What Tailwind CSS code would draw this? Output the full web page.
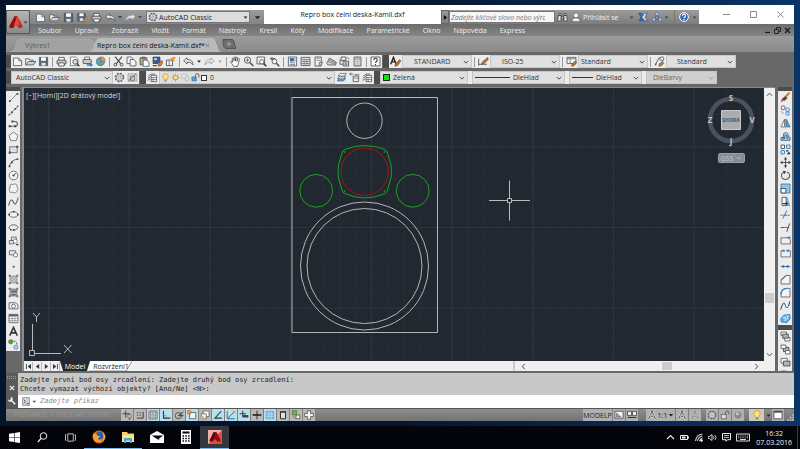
<!DOCTYPE html>
<html lang="cs">
<head>
  <meta charset="UTF-8" />
  <meta name="viewport" content="width=device-width, initial-scale=1" />
  <title>Repro box čelní deska-Kamil.dxf</title>
  <script src="https://cdn.jsdelivr.net/npm/@tailwindcss/browser@4"></script>
</head>
<body class="flex h-screen flex-col overflow-hidden bg-linear-to-r from-[#03142b] via-[#06162f] to-[#0a3566] font-['Open_Sans',sans-serif] text-[7px] leading-[9px] text-[#222]">

  <!-- icon sprite -->
  <svg class="hidden" aria-hidden="true">
    <symbol id="caret" viewBox="0 0 8 8"><path d="M1 2.5h6L4 6z" fill="currentColor"/></symbol>
    <symbol id="chev" viewBox="0 0 8 8"><path d="M1 2.5l3 3 3-3" fill="none" stroke="currentColor" stroke-width="1.1"/></symbol>
    <symbol id="new" viewBox="0 0 16 16"><path d="M2 3h8l4 4v7H2z" fill="#f4f4f4" stroke="#5a606a" stroke-width="1.3"/><path d="M10 3v4h4" fill="none" stroke="#5a606a" stroke-width="1.2"/></symbol>
    <symbol id="open" viewBox="0 0 16 16"><path d="M1 13V4h5l1 2h5v2" fill="#eee" stroke="#5a606a" stroke-width="1.3"/><path d="M1 13l4-5h11l-4 5z" fill="#ccd1d8" stroke="#5a606a" stroke-width="1.3"/></symbol>
    <symbol id="save" viewBox="0 0 16 16"><path d="M2 2h12v12H2z" fill="#5b6778" stroke="#414b59"/><path d="M4.500 2h7v5h-7z" fill="#fff"/><path d="M5 10h6v4H5z" fill="#dfe3e8"/></symbol>
    <symbol id="saveas" viewBox="0 0 16 16"><path d="M1 2h11v11H1z" fill="#5b6778" stroke="#414b59"/><path d="M3.500 2h6v4h-6z" fill="#fff"/><path d="M4 9h5v4H4z" fill="#dfe3e8"/><path d="M14 7l-5 6-1 3 3-2 5-5z" fill="#e59a3c" stroke="#7a5020" stroke-width=".7"/></symbol>
    <symbol id="print" viewBox="0 0 16 16"><path d="M4 6V2h8v4" fill="#fff" stroke="#444" stroke-width="1.2"/><rect x="1.500" y="6" width="13" height="6" rx="1.500" fill="#c9ccd1" stroke="#444" stroke-width="1.3"/><path d="M4 10h8v4.500H4z" fill="#fff" stroke="#444" stroke-width="1.200"/></symbol>
    <symbol id="preview" viewBox="0 0 16 16"><path d="M2 1.500h8l3 3V14H2z" fill="#fff" stroke="#555"/><circle cx="9" cy="8.500" r="3.500" fill="#dbe6f2" stroke="#444" stroke-width="1.300"/><path d="M11.500 11l3.500 4" stroke="#444" stroke-width="2"/></symbol>
    <symbol id="plot" viewBox="0 0 16 16"><path d="M4 5V1.500h7V5" fill="#fff" stroke="#444"/><rect x="1.500" y="5" width="12" height="6" rx="1" fill="#c9ccd1" stroke="#444" stroke-width="1.200"/><path d="M7 12h5V9.500l4 3.500-4 3v-2H7z" fill="#2c7cc4"/></symbol>
    <symbol id="globe" viewBox="0 0 16 16"><path d="M8 2a6 6 0 1 0 6 6H8z" fill="#5f9fd0" stroke="#47607a"/><path d="M2.500 9c3-2 4 4 7 3l-2 2c-3 0-5-2-5-5z" fill="#58a558"/><path d="M9 1a6 6 0 0 1 6 6H9z" fill="#e7953b" stroke="#8b5c20" stroke-width=".6"/></symbol>
    <symbol id="cut" viewBox="0 0 16 16"><path d="M3 1l8 10M13 1L5 11" stroke="#444" stroke-width="1.600"/><circle cx="3.500" cy="12.500" r="2" fill="none" stroke="#444" stroke-width="1.400"/><circle cx="12.500" cy="12.500" r="2" fill="none" stroke="#444" stroke-width="1.400"/></symbol>
    <symbol id="copy" viewBox="0 0 16 16"><path d="M1.500 1.500h6l3 3V11h-9z" fill="#fff" stroke="#555" stroke-width="1.200"/><path d="M6 5h5l3.500 3v6.500H6z" fill="#f4f4f4" stroke="#555" stroke-width="1.200"/></symbol>
    <symbol id="paste" viewBox="0 0 16 16"><path d="M1.500 2.500h10V13h-10z" fill="#b9a283" stroke="#555" stroke-width="1.200"/><path d="M4 1h5v3H4z" fill="#666"/><path d="M6 6h5l3.500 3v6H6z" fill="#fff" stroke="#555" stroke-width="1.200"/></symbol>
    <symbol id="match" viewBox="0 0 16 16"><path d="M1.500 1.500h10v8h-10z" fill="#2d5f9a" stroke="#334"/><path d="M3 3h4v3H3z" fill="#b8d6f0"/><path d="M1 11h8M1 14h6" stroke="#555" stroke-width="1.500"/><path d="M14 6l-5 6v3l4-1 3-5z" fill="#d27c35" stroke="#6a3d18" stroke-width=".7"/></symbol>
    <symbol id="block" viewBox="0 0 16 16"><path d="M2 6v8h9V6z" fill="#f4f4f4" stroke="#4d5a6b" stroke-width="1.300"/><path d="M6 6v8" stroke="#4d5a6b"/><path d="M12 1l4 1-3 3 2 3-4-1-2 2V5l-2-2 3 .2z" fill="#e9913a"/></symbol>
    <symbol id="undo" viewBox="0 0 16 16"><path d="M1 7l5-4.500V5c5 0 8.500 2 8.500 8-2-3.500-4.500-4-8.500-4v2.500z" fill="#e4e6e9" stroke="#4d535c" stroke-width="1.200"/></symbol>
    <symbol id="redo" viewBox="0 0 16 16"><path d="M15 7l-5-4.500V5c-5 0-8.500 2-8.500 8 2-3.500 4.500-4 8.500-4v2.500z" fill="#e4e6e9" stroke="#9a9ea5" stroke-width="1.200"/></symbol>
    <symbol id="pan" viewBox="0 0 16 16"><path d="M5 15c-1-3-4-5-4-7 1-1 2 0 3 1L3 3.500c1-1 2 0 2 1L6 7V2c1-1 2-1 2 0v5l1-5c1-1 2 0 2 1l-1 5 2-4c1-1 2 0 2 1l-2 6-1 4z" fill="#fff" stroke="#444" stroke-width="1.100"/></symbol>
    <symbol id="zoom" viewBox="0 0 16 16"><circle cx="6.500" cy="6" r="4.500" fill="#f4f4f4" stroke="#4c4c4c" stroke-width="1.300"/><path d="M4 6h5M6.500 3.500v5" stroke="#4c4c4c"/><path d="M10 9.500l5 5" stroke="#4c4c4c" stroke-width="2.200"/></symbol>
    <symbol id="zoomwin" viewBox="0 0 16 16"><path d="M1.500 1.500h11v10h-11z" fill="#f4f4f4" stroke="#4c4c4c" stroke-width="1.200"/><circle cx="8.500" cy="8.500" r="3.200" fill="#fff" stroke="#4c4c4c" stroke-width="1.200"/><path d="M11 11l4 4" stroke="#333" stroke-width="2.200"/></symbol>
    <symbol id="zoomprev" viewBox="0 0 16 16"><path d="M1 4l4-3v2h4v2H5v2z" fill="#666"/><circle cx="8" cy="8" r="3.500" fill="#f4f4f4" stroke="#4c4c4c" stroke-width="1.200"/><path d="M10.500 10.500l4.500 4.500" stroke="#4c4c4c" stroke-width="2.200"/></symbol>
    <symbol id="props" viewBox="0 0 16 16"><path d="M2 1.500h12v13H2z" fill="#fff" stroke="#4b5563" stroke-width="1.200"/><path d="M4 3h6v5H4z" fill="#2e6fae"/><path d="M4 10h8M4 12.500h8M11.500 3v5" stroke="#667" stroke-width="1.200"/></symbol>
    <symbol id="dc" viewBox="0 0 16 16"><path d="M1.500 2h13v12h-13z" fill="#e6e8eb" stroke="#4b5563" stroke-width="1.200"/><path d="M1.500 5h13M6 5v9M10 5v9M1.500 8h13M1.500 11h13" stroke="#667" /></symbol>
    <symbol id="palette" viewBox="0 0 16 16"><path d="M3 1.500h9v13H3z" fill="#f4f4f4" stroke="#4b5563" stroke-width="1.300"/><path d="M5 4h5M5 6.500h5" stroke="#777"/><path d="M9 9h5l-3 5H9z" fill="#c9ccd1" stroke="#4b5563"/></symbol>
    <symbol id="sheets" viewBox="0 0 16 16"><path d="M1 11l4-8 10 6-1 4H3z" fill="#d4d7db" stroke="#555" stroke-width="1.200"/><path d="M3 8l11 4M4 5l10 5" stroke="#555"/></symbol>
    <symbol id="markup" viewBox="0 0 16 16"><path d="M3 1.500h7v5H3zM1.500 5v7h4" fill="none" stroke="#555" stroke-width="1.300"/><path d="M6 7.500h8v7H6z" fill="#dfe1e4" stroke="#555" stroke-width="1.300"/><path d="M12 2l3 3M8 10h4M8 12h4" stroke="#555" stroke-width="1.200"/></symbol>
    <symbol id="calc" viewBox="0 0 16 16"><path d="M3 1.500h10v13H3z" fill="#e6e8eb" stroke="#555" stroke-width="1.300"/><path d="M5 3.500h6v2H5z" fill="#fff" stroke="#666" stroke-width=".8"/><path d="M5 8h6M5 10.500h6M5 13h6" stroke="#777" stroke-dasharray="1.500 .8"/></symbol>
    <symbol id="help" viewBox="0 0 16 16"><path d="M1.500 1.500h13v13h-13z" fill="#fff" stroke="#444" stroke-width="1.200"/><path d="M5.500 6c0-3.500 5-3.500 5 0 0 2-2.500 2-2.500 4M8 11.500v2" fill="none" stroke="#333" stroke-width="1.600"/></symbol>
    <symbol id="tstyle" viewBox="0 0 16 16"><path d="M1 12L5 2l4 10M2.500 8.500h5" fill="none" stroke="#222" stroke-width="2"/><path d="M14 5l-6 6-1 4 4-1 5-7z" fill="#b5733c" stroke="#5a3515" stroke-width=".7"/></symbol>
    <symbol id="dstyle" viewBox="0 0 16 16"><path d="M1 4v10M1 12h12" stroke="#555" stroke-width="1.300"/><path d="M14 2l-7 6-2 4 4-1 6-6z" fill="#b5733c" stroke="#5a3515" stroke-width=".7"/></symbol>
    <symbol id="tabstyle" viewBox="0 0 16 16"><path d="M1.500 2h13v9h-13z" fill="#f7f7f7" stroke="#555" stroke-width="1.200"/><path d="M1.500 4h13M6 4v7" stroke="#555"/><path d="M14 7l-5 4-1 4 4-1 3-4z" fill="#c07a3e" stroke="#5a3515" stroke-width=".7"/></symbol>
    <symbol id="mlstyle" viewBox="0 0 16 16"><path d="M2 13L7 3h3" fill="none" stroke="#555" stroke-width="1.300"/><circle cx="11.500" cy="4" r="2.800" fill="#eee" stroke="#555" stroke-width="1.200"/><path d="M1 14l1-4 2 2z" fill="#444"/><path d="M13 8l-5 3-1 4 4-1 3-3z" fill="#c07a3e" stroke="#5a3515" stroke-width=".7"/></symbol>
    <symbol id="gear" viewBox="0 0 16 16"><circle cx="8" cy="8" r="6" fill="none" stroke="#5d6269" stroke-width="2" stroke-dasharray="2.700 2"/><circle cx="8" cy="8" r="4.800" fill="#eee" stroke="#5d6269"/><circle cx="8" cy="8" r="2" fill="#fff" stroke="#5d6269"/></symbol>
    <symbol id="wsave" viewBox="0 0 16 16"><path d="M1.500 2.500h13v11h-13z" fill="#d4d7db" stroke="#777" stroke-dasharray="2 1"/><path d="M2 13L13 3M5 6h6v6H5z" fill="none" stroke="#666" stroke-width="1.200"/></symbol>
    <symbol id="layers" viewBox="0 0 16 16"><path d="M2 6l4-3h6M1 9l4-2M1 12l4-2" fill="none" stroke="#555" stroke-width="1.200"/><path d="M6 5h8v9H6z" fill="#fff" stroke="#555" stroke-width="1.200"/><path d="M6 8h8M6 11h8M9 8v6" stroke="#555"/></symbol>
    <symbol id="bulb" viewBox="0 0 16 16"><path d="M8 1a5 5 0 0 0-3 9l.5 2h5l.5-2A5 5 0 0 0 8 1z" fill="#ffe27a" stroke="#b08a2c"/><path d="M6 13h4v2H6z" fill="#777"/></symbol>
    <symbol id="sun" viewBox="0 0 16 16"><path d="M8 1v14M1 8h14M3 3l10 10M13 3L3 13" stroke="#8a7a4a" stroke-width="1.200"/><circle cx="8" cy="8" r="3.800" fill="#ffe07a" stroke="#b08a2c"/></symbol>
    <symbol id="vpf" viewBox="0 0 16 16"><path d="M1.500 2h9v8h-9z" fill="#e4e4e4" stroke="#aaa"/><circle cx="10.500" cy="10.500" r="4" fill="#ddd" stroke="#aaa"/></symbol>
    <symbol id="lock" viewBox="0 0 16 16"><path d="M1.500 7h8v7h-8z" fill="#4aa0d8" stroke="#23628f"/><path d="M8 7V4a3 3 0 0 1 6 0v4" fill="none" stroke="#555" stroke-width="1.600"/></symbol>
    <symbol id="stack" viewBox="0 0 16 16"><path d="M2 13l3-4h9l-3 4z" fill="#6aaee0" stroke="#45566a"/><path d="M2 10l3-4h9l-3 4z" fill="#b7d9f2" stroke="#45566a"/><path d="M3 6l3-4h9l-3 4z" fill="#f3f3f3" stroke="#45566a"/></symbol>
    <symbol id="lprev" viewBox="0 0 16 16"><path d="M1 3h5M3 1L1 3l2 2" stroke="#555" fill="none" stroke-width="1.200"/><path d="M6 6h8v8H6zM8 4h7" fill="#e8e8e8" stroke="#555" stroke-width="1.200"/><path d="M6 9h8" stroke="#777"/></symbol>

    <symbol id="line" viewBox="0 0 16 16"><path d="M3 13L13 3" stroke="#6d737c" stroke-width="1.200"/><path d="M1.500 12h2.500v2.500H1.500zM12.500 1.500H15V4h-2.500z" fill="#444"/></symbol>
    <symbol id="xline" viewBox="0 0 16 16"><path d="M1 15L15 1" stroke="#6d737c" stroke-width="1.200"/><path d="M4.500 9.500H7V12H4.500zM9.500 4.500H12V7H9.500zM1 13h2v2H1zM13 1h2v2h-2z" fill="#444"/></symbol>
    <symbol id="pline" viewBox="0 0 16 16"><path d="M2 12h8c5 0 5-7 0-7H6" fill="none" stroke="#5a606a" stroke-width="1.600"/><path d="M1 10.500h3v3H1zM5 3.500h3v3H5zM9 10.500h3v3H9z" fill="#444"/></symbol>
    <symbol id="polygon" viewBox="0 0 16 16"><path d="M8 1.500l6.500 5L12 14H4L1.500 6.500z" fill="#f4f4f4" stroke="#6d737c" stroke-width="1.300"/></symbol>
    <symbol id="rect" viewBox="0 0 16 16"><path d="M2.500 4h11v8.500h-11z" fill="#dde0e4" stroke="#6d737c" stroke-width="1.300"/><path d="M1 11h3v3H1zM12 2.500h3v3h-3z" fill="#444"/></symbol>
    <symbol id="arc" viewBox="0 0 16 16"><path d="M2 14C3 8 7 4 14 3" fill="none" stroke="#5a606a" stroke-width="1.400"/><path d="M1 12.500h2.500V15H1zM4.500 6.500H7V9H4.500zM12.500 2H15v2.500h-2.500z" fill="#444"/></symbol>
    <symbol id="circle" viewBox="0 0 16 16"><circle cx="8" cy="8" r="6.300" fill="#f4f4f4" stroke="#6d737c" stroke-width="1.400"/><path d="M8 8l4-4" stroke="#444" stroke-width="1.200"/><circle cx="8" cy="8" r="1.600" fill="#444"/></symbol>
    <symbol id="cloud" viewBox="0 0 16 16"><path d="M4 6C1 4 4 0 7 2.500c3-2.500 8 0 6 3.500 3 2 1 5 0 5 0 4-5 4-6 2-3 2-6 0-4-3-2-1-2-4 1-4z" fill="#f4f4f4" stroke="#6d737c" stroke-width="1.300"/></symbol>
    <symbol id="spline" viewBox="0 0 16 16"><path d="M1 14C3 4 6 4 8 9s4 3 7-7" fill="none" stroke="#5a606a" stroke-width="1.500"/></symbol>
    <symbol id="ellipse" viewBox="0 0 16 16"><ellipse cx="8" cy="8" rx="6" ry="4" fill="#f4f4f4" stroke="#5a606a" stroke-width="1.300"/><path d="M0.500 7H3v2.500H.5zM13 7h2.500v2.500H13zM7 3h2.500v2H7z" fill="#444"/></symbol>
    <symbol id="elarc" viewBox="0 0 16 16"><path d="M4 11C-2 8 4 4 8 4s9 3 5 6c-1 1-3 1.500-5 1.500" fill="none" stroke="#5a606a" stroke-width="1.400"/><path d="M3 10h2.500v2.500H3zM7 10.500h2.500V13H7z" fill="#444"/></symbol>
    <symbol id="insert" viewBox="0 0 16 16"><path d="M5 3h7v5H5zM2 8h6v5H2z" fill="#e4e6e9" stroke="#5a606a" stroke-width="1.200"/><circle cx="10.500" cy="9" r="3" fill="#fff" stroke="#5a606a"/><path d="M11 15h5l-2.500-2.500z" fill="#222"/></symbol>
    <symbol id="mkblock" viewBox="0 0 16 16"><path d="M2 4h9v6H2z" fill="#e4e6e9" stroke="#5a606a" stroke-width="1.200"/><circle cx="11" cy="10" r="3" fill="#fff" stroke="#5a606a" stroke-width="1.200"/></symbol>
    <symbol id="point" viewBox="0 0 16 16"><path d="M7 7h2.500v2.500H7z" fill="#444"/></symbol>
    <symbol id="hatch" viewBox="0 0 16 16"><path d="M3 3h10v10H3z" fill="#c4c8cd" stroke="#5a606a" stroke-dasharray="2 1"/><path d="M3 8l5-5M3 13L13 3M8 13l5-5" stroke="#888"/><path d="M1 1h3v3H1zM12 12h3v3h-3zM12 1h3v3h-3zM1 12h3v3H1z" fill="#777"/></symbol>
    <symbol id="grad" viewBox="0 0 16 16"><path d="M3 3h10v10H3z" fill="#a9aeb5" stroke="#5a606a"/><path d="M5 5h8v3H5zM5 10h6v2H5z" fill="#60666f"/><path d="M1 1h3v3H1zM12 12h3v3h-3zM12 1h3v3h-3zM1 12h3v3H1z" fill="#777"/></symbol>
    <symbol id="region" viewBox="0 0 16 16"><path d="M1.500 4h6c4-1 7 2 7 5v4h-13z" fill="#e9ebed" stroke="#5a606a" stroke-width="1.200"/><circle cx="8" cy="9" r="2.800" fill="#fff" stroke="#5a606a" stroke-width="1.200"/></symbol>
    <symbol id="table" viewBox="0 0 16 16"><path d="M1.500 2h13v12h-13z" fill="#fff" stroke="#5a606a" stroke-width="1.200"/><path d="M1.500 2h13v3h-13z" fill="#5a606a"/><path d="M6 5v9M10 5v9M1.500 8h13M1.500 11h13" stroke="#888"/></symbol>
    <symbol id="mtext" viewBox="0 0 16 16"><path d="M2.500 14L8 2l5.500 12M4.500 10h7" fill="none" stroke="#333" stroke-width="2.200"/></symbol>
    <symbol id="addsel" viewBox="0 0 16 16"><circle cx="4" cy="4" r="3" fill="#52a83e" stroke="#2f6d22"/><path d="M8 3c4 0 5 2 5 5" fill="none" stroke="#444" stroke-width="1.300" stroke-dasharray="2 1"/><circle cx="11.500" cy="12" r="3" fill="#a8d2f2" stroke="#3c82b8"/></symbol>

    <symbol id="erase" viewBox="0 0 16 16"><path d="M14 1L7 8" stroke="#c47a35" stroke-width="2.600"/><path d="M8 6l3 3-5 4-4-3z" fill="#4b4b4b"/><path d="M1 12l3-1 1 2-3 2z" fill="#d9534f"/></symbol>
    <symbol id="mcopy" viewBox="0 0 16 16"><circle cx="4.500" cy="4" r="2.800" fill="#fff" stroke="#444" stroke-width="1.200"/><circle cx="11" cy="7" r="2.800" fill="#d3e8f8" stroke="#2c7cc4" stroke-width="1.200"/><circle cx="11" cy="12.500" r="2.500" fill="#d3e8f8" stroke="#2c7cc4" stroke-width="1.200"/><path d="M2 9l3 4" stroke="#2c7cc4"/></symbol>
    <symbol id="mirror" viewBox="0 0 16 16"><path d="M6.500 2v11H1.500z" fill="#fff" stroke="#555" stroke-width="1.100"/><path d="M9.500 2v11h5z" fill="#56a5df" stroke="#2c6ba4" stroke-width="1.100"/><path d="M8 1v14" stroke="#777"/></symbol>
    <symbol id="offset" viewBox="0 0 16 16"><path d="M1.500 13.500v-4H5V6c0-5 7-5 7 0v3h2.500v4.500z" fill="#b9dbf4" stroke="#2c6ba4" stroke-width="1.400"/><path d="M4 12V11h3V7c0-2 3-2 3 0v4h2" fill="none" stroke="#444" stroke-width="1.200"/></symbol>
    <symbol id="array" viewBox="0 0 16 16"><path d="M1.500 1.500h5v5h-5z" fill="#fff" stroke="#444" stroke-width="1.300"/><path d="M9.500 1.500h5v5h-5zM1.500 9.500h5v5h-5z" fill="#d3e8f8" stroke="#2c7cc4" stroke-width="1.300"/><path d="M9 9h3v2H9zM10 15h5l-2-4z" fill="#222"/></symbol>
    <symbol id="move" viewBox="0 0 16 16"><path d="M8 2v12M2 8h12" stroke="#444" stroke-width="1.300"/><path d="M8 0l2.500 3.500h-5zM8 16l2.500-3.500h-5zM0 8l3.500-2.500v5zM16 8l-3.500-2.500v5z" fill="#444"/></symbol>
    <symbol id="rotate" viewBox="0 0 16 16"><path d="M5 3.500a6 5.500 0 1 0 5-.5" fill="none" stroke="#555" stroke-width="1.500"/><path d="M4 1l5 1-3 4z" fill="#333"/></symbol>
    <symbol id="scale" viewBox="0 0 16 16"><path d="M1.500 1.500h13v13h-13z" fill="#8fc4ec" stroke="#3c7fb4" stroke-width="1.300"/><path d="M1.500 8h7v6.500h-7z" fill="#fff" stroke="#444" stroke-width="1.300"/></symbol>
    <symbol id="stretch" viewBox="0 0 16 16"><path d="M3 2h6v12H3z" fill="#fff" stroke="#444" stroke-width="1.200"/><path d="M9 2h1l4 12H9z" fill="#8fc4ec" stroke="#3c7fb4"/><path d="M4 10h5v-2l3 3-3 3v-2H4z" fill="#333"/></symbol>
    <symbol id="trim" viewBox="0 0 16 16"><path d="M1 9h4M9 9h6" stroke="#444" stroke-width="1.300" stroke-dasharray="2 1"/><path d="M5 9h4M4 14l6-12" stroke="#2c7cc4" stroke-width="1.400"/></symbol>
    <symbol id="extend" viewBox="0 0 16 16"><path d="M1 8h5" stroke="#444" stroke-width="1.300"/><path d="M6 8h6" stroke="#2c7cc4" stroke-width="1.400"/><path d="M10 14l4-12" stroke="#444" stroke-width="1.400"/></symbol>
    <symbol id="break1" viewBox="0 0 16 16"><path d="M12 4H1.500v9H15V6" fill="#f1f1f1" stroke="#666" stroke-width="1.300"/><path d="M11 2.500h4v3h-4z" fill="#2c7cc4"/></symbol>
    <symbol id="break2" viewBox="0 0 16 16"><path d="M4 4H1.500v9H15V4h-3" fill="#f1f1f1" stroke="#666" stroke-width="1.300"/><path d="M3.500 2.500H7v3H3.500zM9.500 2.500H13v3H9.500z" fill="#2c7cc4"/></symbol>
    <symbol id="join" viewBox="0 0 16 16"><path d="M1 8h14" stroke="#2c7cc4" stroke-width="1.400"/><path d="M4 5.500L7.500 8 4 10.500zM12 5.500L8.500 8l3.500 2.500z" fill="#2c5f94"/></symbol>
    <symbol id="chamfer" viewBox="0 0 16 16"><path d="M1.500 14.500V9L9 2h5.500v12.500z" fill="#f4f4f4" stroke="#666" stroke-width="1.300"/><path d="M1.500 9L9 2" stroke="#2c7cc4" stroke-width="1.600"/></symbol>
    <symbol id="fillet" viewBox="0 0 16 16"><path d="M1.500 14.500V11c0-6 4-9 9-9h4v12.500z" fill="#f4f4f4" stroke="#666" stroke-width="1.300"/><path d="M1.500 11c0-6 4-9 9-9" fill="none" stroke="#2c7cc4" stroke-width="1.600"/></symbol>
    <symbol id="blend" viewBox="0 0 16 16"><path d="M1 14c1-4 2-6 3-8M12 9c1-2 2-4 2-7" fill="none" stroke="#444" stroke-width="1.500"/><path d="M4 6c4-6 3 9 8 4" fill="none" stroke="#2c7cc4" stroke-width="1.500"/></symbol>
    <symbol id="explode" viewBox="0 0 16 16"><path d="M1 8l5-5 8-1 1 6-5 6-8-1z" fill="#62aee6" stroke="#2c6ba4"/><path d="M4 7l4-1-1 6M9 4l3 1-2 5" fill="none" stroke="#e8f4fd" stroke-width="1.300"/></symbol>
    <symbol id="order1" viewBox="0 0 16 16"><path d="M1.500 1.500h8v5h-8zM7 9.500h7.500v5H7z" fill="#fff" stroke="#555" stroke-width="1.200"/><path d="M4 4.500h8v6H4z" fill="#aab4bf" stroke="#444" stroke-width="1.200"/></symbol>
    <symbol id="order2" viewBox="0 0 16 16"><path d="M5 5h8v6H5z" fill="#aab4bf" stroke="#444" stroke-width="1.200"/><path d="M1.500 1.500h7v5h-7zM8 9.500h6.500v5H8z" fill="#fff" stroke="#555" stroke-width="1.200"/></symbol>
    <symbol id="order3" viewBox="0 0 16 16"><path d="M1.500 2h9v7h-9z" fill="#fff" stroke="#555" stroke-width="1.200"/><path d="M5 6h9.500v7H5z" fill="#aab4bf" stroke="#444" stroke-width="1.200"/></symbol>

    <symbol id="acad" viewBox="0 0 16 16"><path d="M6.500 1h3L16 14l-4.500 1L8 11l-3.500 4L0 14z" fill="#c8221a"/><path d="M6.500 1L0 14l4.500 1L8 5z" fill="#8d100d"/><path d="M9.500 1L8 5l-2.500 7L8 11l4 1z" fill="#ea4a38"/></symbol>
    <symbol id="binoc" viewBox="0 0 16 16"><path d="M2 5h4v8H1zM10 5h4l1 8h-5zM6 7h4v3H6zM3 2h3v3H3zM10 2h3v3h-3z" fill="#e8e8e8" stroke="#333"/></symbol>
    <symbol id="user" viewBox="0 0 16 16"><circle cx="8" cy="5.500" r="3.800" fill="#fff" stroke="#555"/><path d="M1.500 15c0-7 13-7 13 0z" fill="#fff" stroke="#555"/></symbol>
    <symbol id="exch" viewBox="0 0 16 16"><path d="M1 2h5l3 4-3 4 4 4H2l3-6z" fill="#3f6fc0" stroke="#25427a"/><path d="M15 2h-4L6 8l5 6h4l-4-6z" fill="#dfe8f6" stroke="#25427a"/></symbol>
    <symbol id="a360" viewBox="0 0 16 16"><path d="M8 4l-5 8h10z" fill="none" stroke="#3c5fa0" stroke-width="1.500"/><path d="M6 1h4v4H6zM1 10h4v4H1zM11 10h4v4h-4z" fill="#e6edf8" stroke="#3c5fa0"/></symbol>
    <symbol id="helpc" viewBox="0 0 16 16"><circle cx="8" cy="8" r="7" fill="#3c68b4" stroke="#fff" stroke-width="1.600"/><path d="M5.500 6c0-3.500 5-3.500 5 0 0 2-2.500 2-2.500 4M8 11v2" fill="none" stroke="#fff" stroke-width="1.700"/></symbol>

    <symbol id="sinfer" viewBox="0 0 16 16"><path d="M6 1v11M1 6h12" stroke="#333" stroke-width="1.400"/><circle cx="12" cy="10" r="3" fill="#e4b0a8" stroke="#555"/><path d="M12 13v3" stroke="#2c5fa4" stroke-width="2"/></symbol>
    <symbol id="ssnap" viewBox="0 0 16 16"><path d="M3 13h10V3" fill="none" stroke="#333" stroke-width="1.500"/><path d="M3 3h2v2H3zM7 3h2v2H7zM3 7h2v2H3zM7 7h2v2H7z" fill="#555"/></symbol>
    <symbol id="sgrid" viewBox="0 0 16 16"><path d="M1.500 1.500h13v13h-13z" fill="#f5fcff" stroke="#444"/><path d="M4.500 1v14M8 1v14M11.500 1v14M1 4.500h14M1 8h14M1 11.500h14" stroke="#555" stroke-width=".9"/></symbol>
    <symbol id="sortho" viewBox="0 0 16 16"><path d="M4 1v12h11" fill="none" stroke="#333" stroke-width="1.700"/><path d="M4 9h4v4" fill="none" stroke="#4a86b8"/></symbol>
    <symbol id="spolar" viewBox="0 0 16 16"><circle cx="7" cy="9" r="5" fill="none" stroke="#444" stroke-width="1.400"/><path d="M7 9l8-6M7 9h8" stroke="#333" stroke-width="1.400"/></symbol>
    <symbol id="sosnap" viewBox="0 0 16 16"><path d="M4 4h10v10H4z" fill="#f1f1f1" stroke="#555" stroke-width="1.300"/><path d="M1 1h5v5H1z" fill="#f0a060" stroke="#b45a2a"/></symbol>
    <symbol id="s3d" viewBox="0 0 16 16"><path d="M5 1.500h9.500v9H5z" fill="#f7f7f7" stroke="#555" stroke-width="1.200"/><path d="M2 6h8v8H2z" fill="#f4ece9" stroke="#666" stroke-width="1.200"/><circle cx="4" cy="12" r="2.500" fill="#efa58e"/></symbol>
    <symbol id="strack" viewBox="0 0 16 16"><path d="M13 2L3 13h11" fill="none" stroke="#333" stroke-width="1.700"/></symbol>
    <symbol id="sducs" viewBox="0 0 16 16"><path d="M2 2v12h12M2 14L13 3" fill="none" stroke="#3a6f9f" stroke-width="1.600"/><path d="M10 1h5v5z" fill="#e8a33a"/></symbol>
    <symbol id="sdyn" viewBox="0 0 16 16"><path d="M6 1v10M1 6h10" stroke="#333" stroke-width="1.500"/><path d="M6 8h9v4H6z" fill="#444"/></symbol>
    <symbol id="slwt" viewBox="0 0 16 16"><path d="M8 1v14" stroke="#222" stroke-width="1.400"/><path d="M1 8h14" stroke="#222" stroke-width="2.600"/></symbol>
    <symbol id="stpy" viewBox="0 0 16 16"><path d="M2 2h12v12H2z" fill="#7db8dc" stroke="#3f7ba8" stroke-dasharray="1.500 1"/><path d="M2 6h12M2 10h12M6 2v12M10 2v12" stroke="#d8eefa" stroke-width=".8"/></symbol>
    <symbol id="sqp" viewBox="0 0 16 16"><path d="M4 3h8v11H4z" fill="#ddd" stroke="#333" stroke-width="1.600"/><path d="M3 3h10" stroke="#333" stroke-width="2"/></symbol>
    <symbol id="ssc" viewBox="0 0 16 16"><path d="M2 1h7v7H2z" fill="#6fb25c" stroke="#3d6e30"/><path d="M8 8h6v6H8z" fill="#eee" stroke="#555" stroke-width="1.300"/><path d="M3 10l4 4" stroke="#555" stroke-width="1.300"/></symbol>
    <symbol id="sam" viewBox="0 0 16 16"><path d="M5.500 1h5v4.500H15v5h-4.500V15h-5v-4.500H1v-5h4.500z" fill="#f3f3f3" stroke="#555" stroke-width="1.300"/></symbol>
    <symbol id="slay" viewBox="0 0 16 16"><path d="M1.500 2h13v11h-13z" fill="#f4f4f4" stroke="#444" stroke-width="1.200"/><path d="M4 5l7 6H4z" fill="#9aa" stroke="#555"/></symbol>
    <symbol id="squick" viewBox="0 0 16 16"><path d="M1 2h6v7H1zM9 2h6v7H9z" fill="#fff" stroke="#333" stroke-width="1.300"/><path d="M1 12h14" stroke="#333" stroke-width="1.600"/></symbol>
    <symbol id="sanno" viewBox="0 0 16 16"><path d="M8 1L3 13M8 1l5 12M8 1v9M1 14l7-4 7 4" fill="none" stroke="#f2f2f2" stroke-width="3"/><path d="M8 1L3 13M8 1l5 12M8 1v9M1 14l7-4 7 4" fill="none" stroke="#444" stroke-width="1.200"/></symbol>
  </svg>

  <!-- application window -->
  <main class="mx-[6px] mt-[5px] mb-[5px] flex min-h-0 flex-1 flex-col bg-[#686868]">

    <!-- title bar -->
    <header class="relative shrink-0">
      <button aria-label="Nabídka aplikace" class="absolute top-[5px] left-0 z-10 flex h-[24px] w-[24px] items-center border border-[#555] bg-linear-to-b from-[#b5b5b5] to-[#8b8b8b] pl-[2px]">
        <svg class="size-[14px]"><use href="#acad"/></svg>
        <svg class="size-[5px] text-[#444]"><use href="#caret"/></svg>
      </button>
      <div class="flex h-[19px] bg-white pt-[5px]">
        <div class="flex items-center bg-linear-to-b from-[#9c9c9c] to-[#848484] pl-[27px] [&>button]:flex [&>button]:w-[14px] [&>button]:justify-center [&>button>svg]:size-[11px]">
          <button aria-label="Nový"><svg><use href="#new"/></svg></button>
          <button aria-label="Otevřít"><svg><use href="#open"/></svg></button>
          <button aria-label="Uložit"><svg><use href="#save"/></svg></button>
          <button aria-label="Uložit jako"><svg><use href="#saveas"/></svg></button>
          <button aria-label="Tisk"><svg><use href="#print"/></svg></button>
          <button aria-label="Zpět"><svg><use href="#undo"/></svg></button>
          <svg class="size-[6px] text-[#444]"><use href="#caret"/></svg>
          <button aria-label="Znovu"><svg><use href="#redo"/></svg></button>
          <svg class="mr-[3px] size-[6px] text-[#555]"><use href="#caret"/></svg>
          <div class="relative flex h-[12px] w-[104px] items-center border border-[#777] bg-[#dcdcdc] pl-px">
            <svg class="size-[10px]"><use href="#gear"/></svg>
            <select aria-label="Pracovní prostor" class="h-full flex-1 appearance-none pl-px"><option>AutoCAD Classic</option></select>
            <svg class="absolute right-px size-[5px]"><use href="#caret"/></svg>
          </div>
          <button aria-label="Přizpůsobit" class="text-[#222] [&>svg]:p-[2px]"><svg><use href="#caret"/></svg></button>
        </div>
        <h1 class="flex-1 text-center">Repro box čelní deska-Kamil.dxf</h1>
        <div class="flex items-center bg-linear-to-b from-[#9c9c9c] to-[#7c7c7c] text-[#f2f2f2]">
          <button aria-label="Sbalit" class="flex h-full w-[8px] items-center justify-center border border-[#666]"><svg viewBox="0 0 6 6" class="size-[5px]"><path d="M1 0l4 3-4 3z" fill="#111"/></svg></button>
          <input type="search" aria-label="Hledat" placeholder="Zadejte klíčové slovo nebo výraz." class="h-[12px] w-[106px] border border-[#777] bg-[#f6f6f6] pl-px text-[7px] italic placeholder:text-[#777]" />
          <button aria-label="Vyhledat" class="ml-[2px]"><svg class="size-[11px]"><use href="#binoc"/></svg></button>
          <button class="ml-[3px] flex w-[58px] items-center"><svg class="mr-[2px] size-[10px]"><use href="#user"/></svg>Přihlásit se</button>
          <svg class="size-[5px] text-[#444]"><use href="#caret"/></svg>
          <button aria-label="Exchange" class="ml-[4px]"><svg class="size-[10px]"><use href="#exch"/></svg></button>
          <button aria-label="A360" class="ml-[4px] flex items-center"><svg class="size-[10px]"><use href="#a360"/></svg><svg class="ml-[2px] size-[5px] text-[#444]"><use href="#caret"/></svg></button>
          <button aria-label="Nápověda" class="ml-[5px] flex h-full items-center border-l border-[#777] pr-[2px] pl-[4px]"><svg class="size-[10px]"><use href="#helpc"/></svg><svg class="ml-[3px] size-[5px] text-[#444]"><use href="#caret"/></svg></button>
        </div>
        <div class="-mt-[5px] ml-[14px] flex items-center [&>button]:flex [&>button]:w-[27px] [&>button]:justify-center [&_svg]:size-[7px]">
          <button aria-label="Minimalizovat"><svg viewBox="0 0 7 7"><path d="M0 3.500h7" stroke="#888"/></svg></button>
          <button aria-label="Maximalizovat"><svg viewBox="0 0 7 7"><path d="M.5.5h6v6h-6z" fill="none" stroke="#888"/></svg></button>
          <button aria-label="Zavřít"><svg viewBox="0 0 7 7"><path d="M.5.5l6 6m0-6l-6 6" stroke="#888"/></svg></button>
        </div>
      </div>

      <!-- menu -->
      <nav class="flex h-[12px] items-center bg-linear-to-b from-[#6c6c6c] to-[#858585] pl-[32px] text-[#f0f0f0]">
        <div class="flex flex-1 gap-[13px]">
          <a href="#">Soubor</a><a href="#">Upravit</a><a href="#">Zobrazit</a><a href="#">Vložit</a><a href="#">Formát</a><a href="#">Nástroje</a><a href="#">Kreslí</a><a href="#">Kóty</a><a href="#">Modifikace</a><a href="#">Parametrické</a><a href="#">Okno</a><a href="#">Nápověda</a><a href="#">Express</a>
        </div>
        <div class="flex gap-[3px] pr-[3px] [&_svg]:size-[7px]">
          <button aria-label="Minimalizovat výkres"><svg viewBox="0 0 7 7"><path d="M1 5.500h5" stroke="#222" stroke-width="1.300"/></svg></button>
          <button aria-label="Obnovit výkres"><svg viewBox="0 0 7 7"><path d="M2.500 2V.5h4v4H5M.5 2.500h4v4h-4z" fill="none" stroke="#222"/></svg></button>
          <button aria-label="Zavřít výkres"><svg viewBox="0 0 7 7"><path d="M1 1l5 5m0-5L1 6" stroke="#222" stroke-width="1.500"/></svg></button>
        </div>
      </nav>
    </header>

    <!-- file tabs -->
    <div class="flex h-[16px] shrink-0 items-end bg-linear-to-b from-[#9b9b9b] to-[#8b8b8b] pl-[4px] whitespace-nowrap">
      <button class="relative h-[14px] w-[84px] pl-[15px] text-left text-[#5c5c5c]">
        <svg viewBox="0 0 84 14" preserveAspectRatio="none" class="absolute inset-0 size-full"><path d="M0 14C6 14 5 1 11 1h68l5 3v10z" fill="#a2a2a2" stroke="#b0b0b0" stroke-width=".5"/></svg>
        <span class="relative">Výkres1</span>
      </button>
      <button class="relative -ml-[4px] h-[14px] w-[132px] pl-[7px] text-left text-[#111]">
        <svg viewBox="0 0 132 14" preserveAspectRatio="none" class="absolute inset-0 size-full"><path d="M-1 14C5 14 3 0 10 0h112c5 0 5 14 10 14z" fill="#b9b9b9"/></svg>
        <span class="relative flex items-center justify-between pr-[12px]">Repro box čelní deska-Kamil.dxf* <svg viewBox="0 0 7 7" class="size-[5px]"><path d="M1 1l5 5m0-5L1 6" stroke="#777" stroke-width="1.300"/></svg></span>
      </button>
      <button aria-label="Nový výkres" class="self-center"><svg viewBox="0 0 14 10" class="h-[10px] w-[14px]"><path d="M1 .5h9c3 0 2 6 4 9H4C1 9 1 4 1 .5z" fill="#6c6c6c" stroke="#555"/><path d="M7 2.500v5M4.500 5h5" stroke="#999" stroke-width="1.300"/></svg></button>
    </div>

    <!-- toolbars, first row -->
    <div class="mt-[3px] flex h-[13px] shrink-0">
      <div class="flex items-center border-l-[5px] border-[#4c4c4c] bg-[#ececec] [&>button]:flex [&>button]:w-[13px] [&>button]:justify-center [&>button>svg]:size-[11px] [&>hr]:mx-[2px] [&>hr]:h-[10px] [&>hr]:w-px [&>hr]:border-0 [&>hr]:bg-[#999] [&>svg]:w-[8px] [&>svg]:h-[5px]">
        <button aria-label="Nový"><svg><use href="#new"/></svg></button>
        <button aria-label="Otevřít"><svg><use href="#open"/></svg></button>
        <button aria-label="Uložit"><svg><use href="#save"/></svg></button>
        <hr>
        <button aria-label="Tisk"><svg><use href="#print"/></svg></button>
        <button aria-label="Náhled"><svg><use href="#preview"/></svg></button>
        <button aria-label="Publikovat"><svg><use href="#plot"/></svg></button>
        <button aria-label="3D DWF"><svg><use href="#globe"/></svg></button>
        <hr>
        <button aria-label="Vyjmout"><svg><use href="#cut"/></svg></button>
        <button aria-label="Kopírovat"><svg><use href="#copy"/></svg></button>
        <button aria-label="Vložit"><svg><use href="#paste"/></svg></button>
        <button aria-label="Kopie vlastností"><svg><use href="#match"/></svg></button>
        <button aria-label="Editor bloků"><svg><use href="#block"/></svg></button>
        <hr>
        <button aria-label="Zpět"><svg><use href="#undo"/></svg></button>
        <svg><use href="#caret"/></svg>
        <button aria-label="Znovu"><svg><use href="#redo"/></svg></button>
        <svg class="text-[#999]"><use href="#caret"/></svg>
        <hr>
        <button aria-label="Posun"><svg><use href="#pan"/></svg></button>
        <button aria-label="Zoom"><svg><use href="#zoom"/></svg></button>
        <button aria-label="Zoom okno"><svg><use href="#zoomwin"/></svg></button>
        <button aria-label="Zoom předchozí"><svg><use href="#zoomprev"/></svg></button>
        <hr>
        <button aria-label="Vlastnosti"><svg><use href="#props"/></svg></button>
        <button aria-label="DesignCenter"><svg><use href="#dc"/></svg></button>
        <button aria-label="Nástrojové palety"><svg><use href="#palette"/></svg></button>
        <button aria-label="Sady listů"><svg><use href="#sheets"/></svg></button>
        <button aria-label="Revize"><svg><use href="#markup"/></svg></button>
        <button aria-label="Kalkulačka"><svg><use href="#calc"/></svg></button>
        <hr>
        <button aria-label="Nápověda"><svg><use href="#help"/></svg></button>
      </div>
      <div class="ml-px flex items-center border-l-[6px] border-[#4c4c4c] bg-[#ececec] text-[#333] [&>button]:flex [&>button]:w-[13px] [&>button]:justify-center [&>button>svg]:size-[11px] [&>div]:relative [&>div]:h-[13px] [&>div]:w-[70px] [&>div]:border [&>div]:border-[#c6c6c6] [&>div]:bg-[#e0e0e0] [&>div>svg]:absolute [&>div>svg]:top-[3px] [&>div>svg]:right-[2px] [&>div>svg]:size-[6px] [&>hr]:mx-[2px] [&>hr]:h-[10px] [&>hr]:w-px [&>hr]:border-0 [&>hr]:bg-[#999]">
        <button aria-label="Styl textu"><svg><use href="#tstyle"/></svg></button>
        <div><select aria-label="Styl textu" class="size-full appearance-none pl-[11px]"><option>STANDARD</option></select><svg><use href="#chev"/></svg></div>
        <hr>
        <button aria-label="Kótovací styl"><svg><use href="#dstyle"/></svg></button>
        <div><select aria-label="Kótovací styl" class="size-full appearance-none pl-[11px]"><option>ISO-25</option></select><svg><use href="#chev"/></svg></div>
        <hr>
        <button aria-label="Styl tabulky"><svg><use href="#tabstyle"/></svg></button>
        <div><select aria-label="Styl tabulky" class="size-full appearance-none pl-[2px]"><option>Standard</option></select><svg><use href="#chev"/></svg></div>
        <hr>
        <button aria-label="Styl odkazu"><svg><use href="#mlstyle"/></svg></button>
        <div><select aria-label="Styl odkazu" class="size-full appearance-none pl-[10px]"><option>Standard</option></select><svg><use href="#chev"/></svg></div>
      </div>
    </div>

    <!-- toolbars, second row -->
    <div class="mt-[3px] flex h-[13px] shrink-0 text-[#333]">
      <div class="flex items-center border-l-[5px] border-[#4c4c4c] bg-[#ececec] [&>button]:flex [&>button]:w-[13px] [&>button]:justify-center [&>button>svg]:size-[11px]">
        <div class="relative h-full w-[102px] border border-[#c6c6c6] bg-[#e0e0e0]"><select aria-label="Pracovní prostor" class="size-full appearance-none pl-[4px]"><option>AutoCAD Classic</option></select><svg class="absolute top-[3px] right-[2px] size-[6px]"><use href="#chev"/></svg></div>
        <button aria-label="Nastavení"><svg><use href="#gear"/></svg></button>
        <button aria-label="Uložit prostor"><svg><use href="#wsave"/></svg></button>
      </div>
      <div class="ml-px flex items-center border-l-[6px] border-[#4c4c4c] bg-[#ececec] [&>button]:flex [&>button]:w-[13px] [&>button]:justify-center [&>button>svg]:size-[11px]">
        <button aria-label="Správce hladin"><svg><use href="#layers"/></svg></button>
        <div class="relative flex h-full w-[176px] items-center border border-[#c6c6c6] bg-[#e0e0e0] pl-px [&>svg]:mr-px [&>svg]:size-[9px]">
          <svg><use href="#bulb"/></svg><svg><use href="#sun"/></svg><svg><use href="#vpf"/></svg><svg><use href="#lock"/></svg>
          <span class="size-[6px] border border-[#333] bg-white"></span>
          <select aria-label="Hladina" class="h-full flex-1 appearance-none pl-[3px]"><option>0</option></select>
          <span class="pointer-events-none pr-[2px]"><svg class="size-[6px]"><use href="#chev"/></svg></span>
        </div>
        <button aria-label="Hladina objektu"><svg><use href="#stack"/></svg></button>
        <button aria-label="Předchozí hladina"><svg><use href="#lprev"/></svg></button>
        <button aria-label="Stavy hladin"><svg><use href="#layers"/></svg></button>
      </div>
      <div class="flex items-center gap-[4px] border-l-[6px] border-[#4c4c4c] bg-[#ececec] [&>div]:flex [&>div]:h-full [&>div]:items-center [&>div]:border [&>div]:border-[#c6c6c6] [&>div]:bg-[#e0e0e0] [&>div]:px-[2px] [&>div>svg]:size-[6px]">
        <div class="w-[88px]"><span class="size-[7px] border border-[#222] bg-[#00f000]"></span><select aria-label="Barva" class="h-full flex-1 appearance-none pl-[3px]"><option>Zelená</option></select><svg><use href="#chev"/></svg></div>
        <div class="w-[93px]"><span class="h-px w-[35px] bg-[#333]"></span><select aria-label="Typ čáry" class="h-full flex-1 appearance-none pl-[3px]"><option>DleHlad</option></select><svg><use href="#chev"/></svg></div>
        <div class="w-[73px]"><span class="h-px w-[21px] bg-[#333]"></span><select aria-label="Tloušťka čáry" class="h-full flex-1 appearance-none pl-[3px]"><option>DleHlad</option></select><svg><use href="#chev"/></svg></div>
        <div class="w-[71px] bg-[#cfcfcf]! text-[#999]"><select disabled aria-label="Styl vykreslení" class="h-full flex-1 appearance-none pl-[4px] text-[#666]"><option>DleBarvy</option></select><svg><use href="#chev"/></svg></div>
      </div>
    </div>

    <!-- drawing area with side toolbars -->
    <div class="mt-[3px] flex min-h-0 flex-1">
      <div class="flex w-[14px] shrink-0 flex-col self-start border-t-[4px] border-[#4c4c4c] bg-[#ececec] [&>button]:flex [&>button]:h-[13px] [&>button]:items-center [&>button]:justify-center [&>button>svg]:size-[11px]">
        <button aria-label="Úsečka"><svg><use href="#line"/></svg></button>
        <button aria-label="Přímka"><svg><use href="#xline"/></svg></button>
        <button aria-label="Křivka"><svg><use href="#pline"/></svg></button>
        <button aria-label="Polygon"><svg><use href="#polygon"/></svg></button>
        <button aria-label="Obdélník"><svg><use href="#rect"/></svg></button>
        <button aria-label="Oblouk"><svg><use href="#arc"/></svg></button>
        <button aria-label="Kružnice"><svg><use href="#circle"/></svg></button>
        <button aria-label="Revizní obláček"><svg><use href="#cloud"/></svg></button>
        <button aria-label="Spline"><svg><use href="#spline"/></svg></button>
        <button aria-label="Elipsa"><svg><use href="#ellipse"/></svg></button>
        <button aria-label="Eliptický oblouk"><svg><use href="#elarc"/></svg></button>
        <button aria-label="Vložit blok"><svg><use href="#insert"/></svg></button>
        <button aria-label="Vytvořit blok"><svg><use href="#mkblock"/></svg></button>
        <button aria-label="Bod"><svg><use href="#point"/></svg></button>
        <button aria-label="Šrafy"><svg><use href="#hatch"/></svg></button>
        <button aria-label="Gradient"><svg><use href="#grad"/></svg></button>
        <button aria-label="Oblast"><svg><use href="#region"/></svg></button>
        <button aria-label="Tabulka"><svg><use href="#table"/></svg></button>
        <button aria-label="Text"><svg><use href="#mtext"/></svg></button>
        <button aria-label="Přidat vybrané"><svg><use href="#addsel"/></svg></button>
      </div>

      <div class="mx-[2px] flex min-w-0 flex-1 flex-col border-t border-l-2 border-[#8a8a8a]">
        <div class="flex min-h-0 flex-1">
          <div class="relative min-w-0 flex-1 bg-[#212830]">
            <svg viewBox="24 88 740 273" preserveAspectRatio="xMidYMid slice" class="size-full" fill="none">
              <defs>
                <pattern id="minor" x="48.500" y="65.600" width="16.140" height="16.140" patternUnits="userSpaceOnUse"><path d="M0 .5h16.140M.5 0v16.140" stroke="#252c36"/></pattern>
                <pattern id="major" x="48" y="65.600" width="80.700" height="80.700" patternUnits="userSpaceOnUse"><path d="M0 .5h80.700M.5 0v80.700" stroke="#2c343f"/></pattern>
              </defs>
              <rect x="24" y="88" width="740" height="273" fill="url(#minor)"/>
              <rect x="24" y="88" width="740" height="273" fill="url(#major)"/>
              <g stroke="#b4b6b9">
                <path d="M292 97.500h145.500v235H292z"/>
                <circle cx="364.500" cy="120.700" r="17.700"/>
                <circle cx="364.500" cy="266" r="64"/>
                <circle cx="364.500" cy="266" r="57.500"/>
              </g>
              <g stroke="#16a51b">
                <circle cx="316.200" cy="190.800" r="16.400"/>
                <circle cx="412.700" cy="190.800" r="16.400"/>
                <path d="M345 149.500Q355 145.500 364.700 145.500T385 149.500Q387 150.500 387.500 153L391 165Q392 171.500 391 178L387.500 190Q387 193 385 193.500Q375 198 364.700 198T345 193.500Q342.500 193 342 190L338.500 178Q337.500 171.500 338.500 165L342 153Q342.500 150 345 149.500z"/>
                <path d="M343.800 152h1.500M383.800 152h1.500M343.800 191h1.500M383.800 191h1.500" stroke-width="1.500"/>
              </g>
              <circle cx="364.700" cy="171.700" r="23.700" stroke="#a0171b"/>
              <g stroke="#b8babc">
                <path d="M489 200.500h18m4 0h19M509.500 180.500v18m0 4v18M507.500 198.500h4v4h-4z"/>
                <path d="M32.500 350v-26M35 353.500h26M29.500 350.500h5v5h-5zM33 313l3.500 4 3.500-4M36.500 317v5M64 345l7.500 8M71.500 345l-7.500 8"/>
              </g>
            </svg>
            <div class="absolute top-[3px] left-[2px] flex text-[#dadcde]"><button>[−]</button><button>[Horní]</button><button>[2D drátový model]</button></div>
            <div class="absolute top-[5px] right-[8px] flex w-[50px] flex-col items-center">
              <svg viewBox="0 0 50 54" class="h-[54px] w-[50px]" font-size="8" font-weight="700" text-anchor="middle">
                <circle cx="25" cy="27" r="21" fill="none" stroke="#4b525b" stroke-width="4.500"/>
                <path d="M15.500 17.500h19v19h-19z" fill="#a9adb2" stroke="#c8cacc"/>
                <g fill="#c3c6ca"><text x="25" y="8">S</text><text x="4" y="30">Z</text><text x="46" y="30">V</text><text x="25" y="51">J</text></g>
                <text x="25" y="29" font-size="5" fill="#4a5058">SHORA</text>
              </svg>
              <button class="mt-[6px] flex h-[10px] w-[27px] items-center justify-between rounded-[2px] border border-[#9a9fac] bg-[#868b98] px-[2px] text-[#c3c6ce]">GSS<svg class="size-[6px]"><use href="#chev"/></svg></button>
            </div>
          </div>
          <div class="flex w-[11px] shrink-0 flex-col items-center bg-[#f0f0f0] py-[3px] text-[#444]">
            <svg class="size-[7px] rotate-180"><use href="#chev"/></svg>
            <div class="mt-[195px] h-[10px] w-[9px] bg-[#cdcdcd]"></div>
            <svg class="mt-auto size-[7px]"><use href="#chev"/></svg>
          </div>
        </div>
        <!-- layout tabs -->
        <div class="flex h-[10px] shrink-0 items-center bg-[#f0f0f0]">
          <div class="flex [&>button]:flex [&>button]:h-[9px] [&>button]:w-[9px] [&>button]:items-center [&>button]:justify-center [&>button]:border-r [&>button]:border-[#bbb] [&_svg]:size-[5px]">
            <button aria-label="První"><svg viewBox="0 0 6 6"><path d="M0 0h1v6H0zM6 0v6L2 3z" fill="#333"/></svg></button>
            <button aria-label="Předchozí"><svg viewBox="0 0 6 6"><path d="M5 0v6L1 3z" fill="#333"/></svg></button>
            <button aria-label="Další"><svg viewBox="0 0 6 6"><path d="M1 0v6l4-3z" fill="#333"/></svg></button>
            <button aria-label="Poslední"><svg viewBox="0 0 6 6"><path d="M5 0h1v6H5zM0 0v6l4-3z" fill="#333"/></svg></button>
          </div>
          <button class="relative h-[10px] w-[30px] text-white"><svg viewBox="0 0 29 10" preserveAspectRatio="none" class="absolute inset-0 size-full"><path d="M0 0h29l-3 10H3z" fill="#212830"/></svg><span class="relative">Model</span></button>
          <button class="relative h-[10px] w-[42px] text-[#222]"><svg viewBox="0 0 42 10" preserveAspectRatio="none" class="absolute inset-0 size-full"><path d="M0 0l-3 10h39l6-10" fill="#fff" stroke="#666" stroke-width=".7"/></svg><span class="relative">Rozvržení1</span></button>
          <div class="ml-auto flex h-full w-[262px] items-center border-l-2 border-[#ccc] pr-[15px] pl-[5px] text-[#444]">
            <svg class="size-[7px] rotate-90"><use href="#chev"/></svg>
            <div class="ml-[135px] h-[8px] w-[10px] bg-[#cdcdcd]"></div>
            <svg class="ml-auto size-[7px] -rotate-90"><use href="#chev"/></svg>
          </div>
        </div>
      </div>

      <div class="mr-[2px] ml-px flex w-[14px] shrink-0 flex-col overflow-hidden border-t-[4px] border-[#4c4c4c] bg-[#ececec] [&>button]:flex [&>button]:h-[13px] [&>button]:shrink-0 [&>button]:items-center [&>button]:justify-center [&>button>svg]:size-[11px]">
        <button aria-label="Vymazat"><svg><use href="#erase"/></svg></button>
        <button aria-label="Kopie"><svg><use href="#mcopy"/></svg></button>
        <button aria-label="Zrcadlit"><svg><use href="#mirror"/></svg></button>
        <button aria-label="Ekvidistanta"><svg><use href="#offset"/></svg></button>
        <button aria-label="Pole"><svg><use href="#array"/></svg></button>
        <button aria-label="Posunout"><svg><use href="#move"/></svg></button>
        <button aria-label="Otočit"><svg><use href="#rotate"/></svg></button>
        <button aria-label="Měřítko"><svg><use href="#scale"/></svg></button>
        <button aria-label="Protáhnout"><svg><use href="#stretch"/></svg></button>
        <button aria-label="Oříznout"><svg><use href="#trim"/></svg></button>
        <button aria-label="Prodloužit"><svg><use href="#extend"/></svg></button>
        <button aria-label="Přerušit v bodě"><svg><use href="#break1"/></svg></button>
        <button aria-label="Přerušit"><svg><use href="#break2"/></svg></button>
        <button aria-label="Spojit"><svg><use href="#join"/></svg></button>
        <button aria-label="Zkosit"><svg><use href="#chamfer"/></svg></button>
        <button aria-label="Zaoblit"><svg><use href="#fillet"/></svg></button>
        <button aria-label="Prolnout"><svg><use href="#blend"/></svg></button>
        <button aria-label="Rozložit"><svg><use href="#explode"/></svg></button>
        <div class="h-[5px] shrink-0 bg-[#4c4c4c]"></div>
        <button aria-label="Přenést navrch"><svg><use href="#order1"/></svg></button>
        <button aria-label="Přenést dospod"><svg><use href="#order2"/></svg></button>
        <button aria-label="Nad objekt"><svg><use href="#order3"/></svg></button>
        <button aria-label="Pod objekt"><svg><use href="#order1"/></svg></button>
      </div>
    </div>

    <!-- command line -->
    <section class="mt-[2px] flex h-[35px] shrink-0">
      <div class="flex w-[12px] shrink-0 flex-col items-center justify-between bg-[#5a5a5a] py-[3px]">
        <svg viewBox="0 0 10 3" class="h-[3px] w-[10px]"><path d="M0 .5h10M0 2.500h10" stroke="#999" stroke-dasharray="1 1"/></svg>
        <button aria-label="Zavřít příkazový řádek"><svg viewBox="0 0 7 7" class="size-[6px]"><path d="M1 1l5 5m0-5L1 6" stroke="#eee" stroke-width="1.400"/></svg></button>
        <button aria-label="Přizpůsobit"><svg viewBox="0 0 10 10" class="size-[8px]"><path d="M4 4l5 5" stroke="#eee" stroke-width="2"/><path d="M3 0l1 2-2 2-2-1c0 3 3 4 5 2s1-5-2-5z" fill="#eee"/></svg></button>
      </div>
      <div class="flex min-w-0 flex-1 flex-col bg-[#c8c8c8] font-['DejaVu_Sans_Mono',monospace]">
        <div class="flex-1 pt-[3px] pl-[2px] text-[#1c1c1c]">
          <p>Zadejte první bod osy zrcadlení: Zadejte druhý bod osy zrcadlení:</p>
          <p>Chcete vymazat výchozí objekty? [Ano/Ne] &lt;N&gt;:</p>
        </div>
        <label class="flex h-[13px] items-center bg-white pl-[4px]">
          <svg viewBox="0 0 16 10" class="h-[9px] w-[14px]"><path d="M.5.5h8v9h-8z" fill="#cfd5dc" stroke="#8a929c"/><path d="M2 3l2 2-2 2M5 7.500h3" fill="none" stroke="#445"/><path d="M12 4h4l-2 2.500z" fill="#444"/></svg>
          <input type="text" aria-label="Příkaz" placeholder="Zadejte příkaz" class="ml-[4px] flex-1 italic outline-none placeholder:text-[#8c8c8c]" />
        </label>
      </div>
    </section>

    <!-- status bar -->
    <footer class="flex h-[13px] shrink-0 items-stretch border-t border-[#555] bg-linear-to-b from-[#8d8d8d] to-[#737373] [&_button]:flex [&_button]:items-center [&_button]:justify-center">
      <span class="w-[115px] pt-px pl-[7px] whitespace-nowrap text-[#979797]">1920.4602, 1108.3346, 0.0000</span>
      <div class="flex [&>button]:w-[13px] [&>button]:border-r [&>button]:border-[#808080] [&>button]:bg-[#b9b9b9] [&_svg]:size-[10px]">
        <button aria-label="Odvodit vazby"><svg><use href="#sinfer"/></svg></button>
        <button aria-label="Krok"><svg><use href="#ssnap"/></svg></button>
        <button aria-label="Rastr" class="bg-[#b8e0ec]!"><svg><use href="#sgrid"/></svg></button>
        <button aria-label="Orto" class="bg-[#b8e0ec]!"><svg><use href="#sortho"/></svg></button>
        <button aria-label="Polar"><svg><use href="#spolar"/></svg></button>
        <button aria-label="Uchop" class="bg-[#b8e0ec]!"><svg><use href="#sosnap"/></svg></button>
        <button aria-label="3D uchop"><svg><use href="#s3d"/></svg></button>
        <button aria-label="Trasování" class="bg-[#b8e0ec]!"><svg><use href="#strack"/></svg></button>
        <button aria-label="DUSS" class="bg-[#b8e0ec]!"><svg><use href="#sducs"/></svg></button>
        <button aria-label="Dynamika" class="bg-[#b8e0ec]!"><svg><use href="#sdyn"/></svg></button>
        <button aria-label="Tloušťka"><svg><use href="#slwt"/></svg></button>
        <button aria-label="Průhlednost" class="bg-[#b8e0ec]!"><svg><use href="#stpy"/></svg></button>
        <button aria-label="Rychlé vlastnosti"><svg><use href="#sqp"/></svg></button>
        <button aria-label="Cyklus výběru"><svg><use href="#ssc"/></svg></button>
        <button aria-label="Monitor poznámek"><svg><use href="#sam"/></svg></button>
      </div>
      <div class="ml-auto flex [&>button]:w-[13px] [&>button]:border-r [&>button]:border-[#808080] [&>button]:bg-[#b0b0b0] [&_svg]:size-[10px]">
        <button class="w-[30px]!">MODELP</button>
        <button aria-label="Rozvržení"><svg><use href="#slay"/></svg></button>
        <button aria-label="Rychlý náhled"><svg><use href="#squick"/></svg></button>
        <button class="ml-[7px] w-[30px]!"><svg><use href="#sanno"/></svg><span class="mx-px">1:1</span><svg class="size-[6px]!"><use href="#caret"/></svg></button>
        <button aria-label="Viditelnost poznámek"><svg><use href="#sanno"/></svg></button>
        <button aria-label="Automatické měřítko"><svg class="opacity-50"><use href="#sanno"/></svg></button>
        <button aria-label="Přepnout prostor" class="ml-[4px]"><svg><use href="#gear"/></svg></button>
        <button aria-label="Zámek panelů"><svg viewBox="0 0 16 16"><path d="M2 7h8v7H2z" fill="#ddd" stroke="#555" stroke-width="1.200"/><path d="M9 7V4a2.500 2.500 0 0 1 5 0v3" fill="none" stroke="#555" stroke-width="1.500"/></svg></button>
        <button aria-label="Hardware"><svg viewBox="0 0 16 16"><circle cx="8" cy="8" r="5" fill="#8d8d8d" stroke="#777"/><circle cx="7" cy="6" r="2.500" fill="#c8c8c8"/></svg></button>
        <button aria-label="Izolovat objekty" class="ml-[4px] w-[16px]! bg-[#cfcdb8]!"><svg><use href="#bulb"/></svg></button>
        <svg class="mx-px size-[5px]! self-center"><use href="#caret"/></svg>
        <button aria-label="Celá obrazovka"><svg viewBox="0 0 16 16"><path d="M1.500 2h13v12h-13z" fill="#fff" stroke="#445" stroke-width="1.300"/><path d="M1.500 3h13" stroke="#445" stroke-width="2.500"/></svg></button>
        <svg viewBox="0 0 8 8" class="ml-[2px] size-[7px]! self-end"><path d="M6 0h2v2H6zM6 3h2v2H6zM6 6h2v2H6zM3 3h2v2H3zM3 6h2v2H3zM0 6h2v2H0z" fill="#bbb"/></svg>
      </div>
    </footer>
  </main>

  <!-- taskbar -->
  <footer class="flex h-[23px] shrink-0 bg-[#03050a] text-[#f0f0f0]">
    <div class="flex [&>button]:flex [&>button]:w-[28px] [&>button]:items-center [&>button]:justify-center [&_svg]:size-[11px]">
      <button aria-label="Start"><svg viewBox="0 0 11 11"><path d="M0 1.700l5-.7v4.200H0zM5.600.9L11 0v5.200H5.600zM0 5.800h5V10l-5-.7zM5.600 5.800H11V11l-5.400-.8z" fill="#fff"/></svg></button>
      <button aria-label="Hledat"><svg viewBox="0 0 11 11"><circle cx="6.500" cy="4" r="3.300" fill="none" stroke="#eee"/><path d="M4 6.500L.8 10" stroke="#eee" stroke-width="1.200"/></svg></button>
      <button aria-label="Zobrazení úloh"><svg viewBox="0 0 12 11"><path d="M3 1.500h6v8H3zM1.500 2.500h-1v6h1M10.500 2.500h1v6h-1" fill="none" stroke="#ccc"/></svg></button>
    </div>
    <div class="flex [&>button]:flex [&>button]:w-[29px] [&>button]:items-center [&>button]:justify-center [&>button]:border-b [&>button]:border-transparent [&_svg]:size-[14px]">
      <button aria-label="Firefox" class="border-[#76b9ed]!"><svg viewBox="0 0 14 14"><circle cx="7" cy="7" r="6.500" fill="#e8721c"/><circle cx="7.800" cy="5.500" r="4" fill="#2b5fa8"/><path d="M1 4c2-1 4 0 5 2 1 0 2 0 2 1-1 1-2 1-2 2 1 2 4 1 5-1-1 5-9 6-10-1z" fill="#f6a02c"/><path d="M10 2c3 2 4 6 1 9 1-3 1-6-1-9z" fill="#fbc53c"/></svg></button>
      <button aria-label="Průzkumník" class="border-[#76b9ed]!"><svg viewBox="0 0 14 14"><path d="M1 2h5l1 1.500h6V12H1z" fill="#f5d36b"/><path d="M1 5h12v7H1z" fill="#fbe391"/><path d="M3 8h8v5H9v-2.500H5V13H3z" fill="#46a8e0"/></svg></button>
      <button aria-label="Pošta"><svg viewBox="0 0 14 14"><path d="M0 5l7-4 7 4v8H0z" fill="#fff"/><path d="M1 5.500h12L8.500 9l2 1.500L7 9 2.500 6z" fill="#03050a"/></svg></button>
      <button aria-label="Kalkulačka"><svg viewBox="0 0 14 14"><path d="M2 0h10v14H2z" fill="#fff"/><path d="M3.500 1.500h7v2h-7z" fill="#03050a"/><path d="M3.500 6h7.500M3.500 8.500h7.500M3.500 11h7.500" stroke="#03050a" stroke-width="1.300" stroke-dasharray="1.500 1.300"/></svg></button>
      <button aria-label="AutoCAD" class="border-[#76b9ed]! bg-[#34373b]"><svg viewBox="0 0 14 14"><path d="M0 0h14v14H0z" fill="#e4483f"/><path d="M0 0h14L0 14z" fill="#f3b0aa"/><path d="M5.500 2h3L13 11l-3 1-3-3-3 3-3-1z" fill="#8e0f10"/><path d="M6 2l1 3-2 5-3 1z" fill="#4c0808"/></svg></button>
    </div>
    <div class="ml-auto flex items-center gap-[5px] [&>button>svg]:h-[9px] [&>button>svg]:w-[9px]">
      <button aria-label="Skryté ikony"><svg viewBox="0 0 9 9"><path d="M1 6l3.500-3.500L8 6" fill="none" stroke="#eee" stroke-width="1.100"/></svg></button>
      <button aria-label="Baterie"><svg viewBox="0 0 9 9"><path d="M.5 2.500h7v4h-7z" fill="none" stroke="#eee"/><path d="M2 3.500h3.500v2H2zM8 3.500h1v2H8z" fill="#eee"/></svg></button>
      <button aria-label="Síť"><svg viewBox="0 0 9 9"><path d="M1.500 8C2 4 4.500 1.500 8.500 1M3.500 8c.5-2.500 2-4.500 5-5M5.500 8c.5-1.500 1.500-2.500 3-3" fill="none" stroke="#ccc" stroke-width="1.100"/><circle cx="7.500" cy="7.500" r="1.200" fill="#fff"/></svg></button>
      <button aria-label="Hlasitost"><svg viewBox="0 0 9 9"><path d="M0 3.500h1.500L4 1.500v6L1.500 5.500H0z" fill="none" stroke="#eee" stroke-width=".9"/><path d="M5.500 3q1 1.500 0 3M7 2q2 2.500 0 5" fill="none" stroke="#ccc" stroke-width=".9"/></svg></button>
      <button aria-label="Oznámení"><svg viewBox="0 0 9 9"><path d="M.5.500h8v6.200H5.500L4 8.300V6.700H.5z" fill="none" stroke="#eee"/><path d="M2 2.500h5M2 4.500h5" stroke="#eee" stroke-width=".8"/></svg></button>
      <button aria-label="Klávesnice"><svg viewBox="0 0 14 9" class="w-[14px]!"><path d="M.5 1h13v7H.5z" fill="none" stroke="#ddd"/><path d="M2 3h10M2 4.800h10" stroke="#bbb" stroke-dasharray="1 .8"/><path d="M4 6.500h6" stroke="#ddd"/></svg></button>
      <time class="ml-[1px] text-center">16:32<br>07.03.2016</time>
      <span class="mr-[2px] h-full w-px bg-[#3b3f45]"></span>
    </div>
  </footer>
</body>
</html>
